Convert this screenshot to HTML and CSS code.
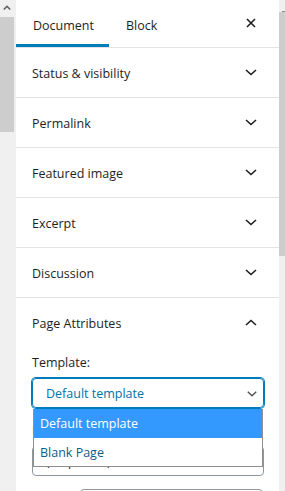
FILE: index.html
```html
<!DOCTYPE html>
<html>
<head>
	<title>Document settings</title>
	<link rel="stylesheet" href="styles.css">
</head>
<body>
	<div class="gutter">
		<div class="gutter-arrow">
			<svg width="8" height="5" viewBox="0 0 8 5"><polyline points="0.8,4.5 4,1.3 7.2,4.5" fill="none" stroke="#606060" stroke-width="1.6"/></svg>
		</div>
		<div class="gutter-thumb"></div>
	</div>

	<div class="sidebar">
		<div class="tabs">
			<a href="#" class="tab active">Document</a>
			<a href="#" class="tab">Block</a>
			<a href="#" class="close">
				<svg width="10" height="10" viewBox="0 0 10 10"><path d="M1 1L9 9M9 1L1 9" stroke="#1e1e1e" stroke-width="1.6"/></svg>
			</a>
		</div>

		<div class="section">
			<span>Status &amp; visibility</span>
			<svg class="chev" width="12" height="7" viewBox="0 0 12 7"><polyline points="1,1 6,5.5 11,1" fill="none" stroke="#1e1e1e" stroke-width="1.6"/></svg>
		</div>
		<div class="section">
			<span>Permalink</span>
			<svg class="chev" width="12" height="7" viewBox="0 0 12 7"><polyline points="1,1 6,5.5 11,1" fill="none" stroke="#1e1e1e" stroke-width="1.6"/></svg>
		</div>
		<div class="section">
			<span>Featured image</span>
			<svg class="chev" width="12" height="7" viewBox="0 0 12 7"><polyline points="1,1 6,5.5 11,1" fill="none" stroke="#1e1e1e" stroke-width="1.6"/></svg>
		</div>
		<div class="section">
			<span>Excerpt</span>
			<svg class="chev" width="12" height="7" viewBox="0 0 12 7"><polyline points="1,1 6,5.5 11,1" fill="none" stroke="#1e1e1e" stroke-width="1.6"/></svg>
		</div>
		<div class="section">
			<span>Discussion</span>
			<svg class="chev" width="12" height="7" viewBox="0 0 12 7"><polyline points="1,1 6,5.5 11,1" fill="none" stroke="#1e1e1e" stroke-width="1.6"/></svg>
		</div>

		<div class="section open">
			<span>Page Attributes</span>
			<svg class="chev" width="12" height="7" viewBox="0 0 12 7"><polyline points="1,6 6,1.5 11,6" fill="none" stroke="#1e1e1e" stroke-width="1.6"/></svg>
		</div>
		<div class="attrs">
			<div class="label">Template:</div>
			<div class="select-wrap">
				<div class="select focused">
					<span>Default template</span>
					<svg width="10" height="6" viewBox="0 0 10 6"><polyline points="0.8,0.8 5,4.8 9.2,0.8" fill="none" stroke="#555" stroke-width="1.5"/></svg>
				</div>
				<ul class="popup">
					<li class="picked">Default template</li>
					<li>Blank Page</li>
				</ul>
			</div>
			<div class="label parent-label">Parent Page:</div>
			<div class="select">
				<span>(no parent)</span>
			</div>
			<div class="order">
				<div class="order-input"></div>
			</div>
		</div>
	</div>

	<div class="scroll">
		<div class="scroll-top"></div>
		<div class="scroll-thumb"></div>
	</div>
</body>
</html>
```

FILE: styles.css
```css
body{
	margin: 0;
	background: #f0f0f0;
	display: flex;
	height: 491px;
	overflow: hidden;
	font-family: "Open Sans", "Noto Sans", sans-serif;
	font-size: 12.5px;
	color: #1e1e1e;
}
.gutter{
	width: 16px;
	flex-shrink: 0;
}
.gutter-arrow{
	height: 17px;
	display: flex;
	justify-content: center;
	padding-top: 5px;
	box-sizing: border-box;
	width: 14px;
}
.gutter-thumb{
	width: 14px;
	height: 115px;
	background: #cdcdcd;
}
.sidebar{
	width: 263px;
	flex-shrink: 0;
	background: white;
}
.tabs{
	display: flex;
	align-items: stretch;
	height: 47px;
	border-bottom: 1px solid #e2e4e7;
}
.tab{
	color: #1e1e1e;
	text-decoration: none;
	padding: 0 16px 0 17px;
	display: flex;
	align-items: center;
	box-sizing: border-box;
	border-bottom: 3px solid transparent;
	padding-top: 6px;
}
.tab.active{
	width: 93px;
	border-bottom-color: #007cba;
}
.close{
	margin-left: auto;
	margin-right: 23px;
	display: flex;
	align-items: center;
	padding-bottom: 1px;
}
.section{
	height: 49px;
	box-sizing: content-box;
	border-bottom: 1px solid #e2e4e7;
	display: flex;
	align-items: center;
	justify-content: space-between;
	padding: 0 22px 0 16px;
}
.section span{
	padding-top: 2px;
}
.section.open{
	border-bottom: none;
}
.chev{
	display: block;
}
.attrs{
	padding: 0 15px 0 16px;
}
.label{
	height: 18px;
	line-height: 18px;
	padding-top: 7px;
	margin-bottom: 6px;
}
.select-wrap{
	position: relative;
}
.select{
	height: 30px;
	box-sizing: border-box;
	border: 1px solid #8d96a0;
	border-radius: 4px;
	display: flex;
	align-items: center;
	justify-content: space-between;
	padding: 1px 6px 0 13px;
	color: #1e1e1e;
}
.select.focused{
	border-color: #007cba;
	box-shadow: 0 0 0 1px #007cba;
	color: #0073aa;
}
.popup{
	position: absolute;
	left: 1px;
	right: 1px;
	top: 31px;
	margin: 0;
	padding: 0;
	list-style: none;
	background: white;
	border: 1px solid #8f8f8f;
	border-top: none;
	z-index: 2;
}
.popup li{
	height: 29px;
	line-height: 30px;
	padding-left: 6px;
	color: #0b5e8a;
}
.popup li + li{
	height: 28px;
}
.popup li.picked{
	background: #3399ff;
	color: white;
}
.parent-label{
	padding-top: 14px;
}
.order{
	display: flex;
	margin-top: 13px;
	padding-left: 48px;
}
.order-input{
	flex: 1;
	height: 28px;
	margin-right: 1px;
	border: 1px solid #8d96a0;
	border-radius: 4px;
}
.scroll{
	width: 6px;
	flex-shrink: 0;
}
.scroll-top{
	height: 12px;
	border-bottom: 1px solid #888;
	box-sizing: border-box;
	width: 4px;
	margin-left: 3px;
}
.scroll-thumb{
	height: 244px;
	background: #cdcdcd;
}
```
